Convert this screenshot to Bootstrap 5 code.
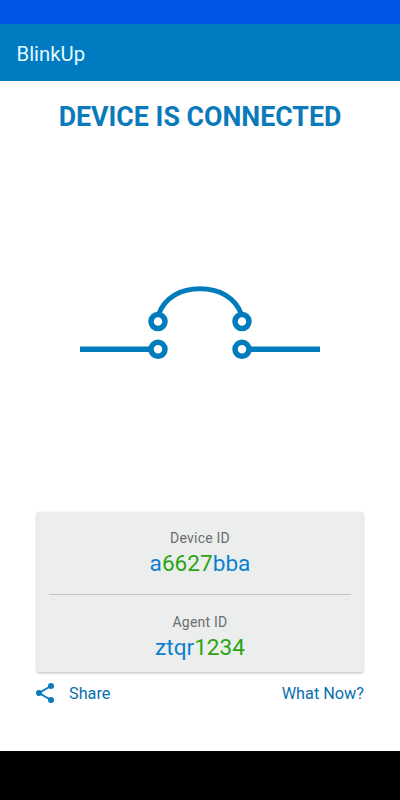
<!DOCTYPE html>
<html lang="en">
<head>
<meta charset="utf-8">
<meta name="viewport" content="width=device-width, initial-scale=1">
<title>BlinkUp</title>
<link href="https://cdn.jsdelivr.net/npm/bootstrap@5.3.0/dist/css/bootstrap.min.css" rel="stylesheet">
<style>
  body { font-family: Roboto, sans-serif; height: 800px; overflow: hidden; line-height: 1; }
  .status-strip { height: 24px; background: #0057e7; }
  .app-bar { height: 57px; background: #007ac1; --bs-navbar-padding-y: 0; }
  .app-title { font-size: 20.3px; color: #e0fbff; line-height: 24px; padding: 2px 0 0 .5px; }
  .headline { font-size: 26.75px; line-height: 30px; color: #0a7abb; margin-top: 21px; white-space: nowrap; }
  .id-card { width: 326px; height: 160px; background: #eceeee; border-radius: 2px; box-shadow: 0 1px 3px rgba(0,0,0,.28); padding: 0 12px; }
  .id-block { padding-top: 18px; }
  .id-label { font-size: 14px; line-height: 16px; color: #6a6d6d; letter-spacing: .23px; }
  .id-value { font-size: 22.6px; line-height: 28px; color: #0b80d0; margin-top: 4px; }
  .id-digits { color: #2ba414; }
  .id-rule { height: 1px; background: #c3c5c5; margin-top: 16px; }
  .id-rule + .id-block { padding-top: 19px; }
  .action-row { width: 328px; height: 79px; padding-top: 10px; }
  .action-link { font-size: 16.25px; line-height: 24px; color: #0870ae; }
  .share-icon { margin: 0 15px 2px 0; }
  .nav-strip { height: 49px; background: #000; }
</style>
<script src="https://cdn.jsdelivr.net/npm/bootstrap@5.3.0/dist/js/bootstrap.bundle.min.js"></script>
</head>
<body class="d-flex flex-column bg-white">
  <div class="status-strip flex-shrink-0"></div>
  <nav class="navbar app-bar flex-shrink-0 px-3">
    <span class="app-title">BlinkUp</span>
  </nav>
  <main class="flex-grow-1 d-flex flex-column align-items-center">
    <h1 class="headline fw-bold mb-0 text-center">DEVICE IS CONNECTED</h1>
    <div class="flex-grow-1 d-flex align-items-center">
      <svg width="240" height="76" viewBox="80 284 240 76" fill="none" stroke="#007cbd" stroke-width="5.5">
        <path d="M80 349.300H150M250 349.300H320"/>
        <path d="M158.500 314.500C165 297 181 288.800 200 288.800S235 297 241.500 314.500" stroke-width="5"/>
        <circle cx="158" cy="321.500" r="7"/>
        <circle cx="242" cy="321.500" r="7"/>
        <circle cx="158" cy="349.300" r="7"/>
        <circle cx="242" cy="349.300" r="7"/>
      </svg>
    </div>
    <section class="id-card text-center">
      <div class="id-block">
        <div class="id-label">Device ID</div>
        <div class="id-value">a<span class="id-digits">6627</span>bba</div>
      </div>
      <div class="id-rule"></div>
      <div class="id-block">
        <div class="id-label">Agent ID</div>
        <div class="id-value">ztqr<span class="id-digits">1234</span></div>
      </div>
    </section>
    <div class="action-row d-flex justify-content-between align-items-start">
      <a href="#" class="action-link text-decoration-none d-flex align-items-center">
        <svg class="share-icon" width="18" height="20" viewBox="0 0 18 20" fill="#0a7abb">
          <path d="M15 3L3 10L15 17" fill="none" stroke="#0a7abb" stroke-width="2"/>
          <circle cx="15" cy="3" r="3"/><circle cx="3" cy="10" r="3"/><circle cx="15" cy="17" r="3"/>
        </svg>
        Share
      </a>
      <a href="#" class="action-link text-decoration-none">What Now?</a>
    </div>
  </main>
  <div class="nav-strip flex-shrink-0"></div>
</body>
</html>
